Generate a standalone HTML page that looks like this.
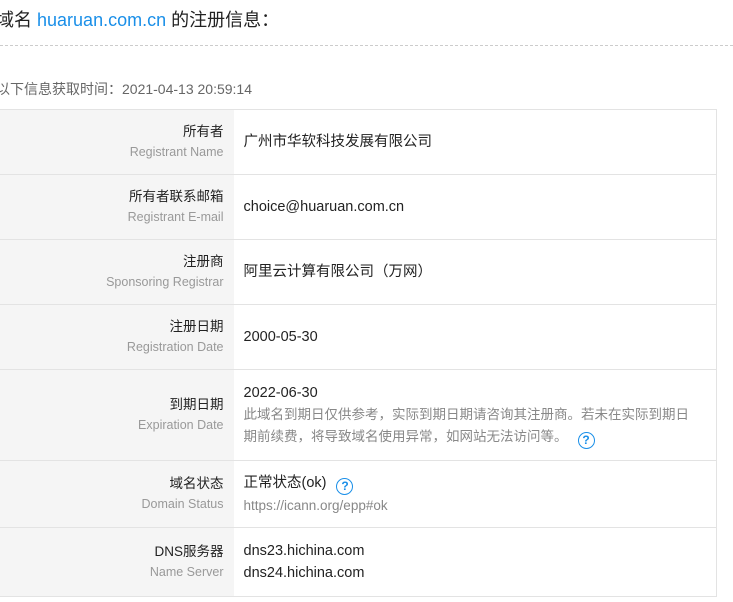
<!DOCTYPE html>
<html><head><meta charset="utf-8"><style>
*{margin:0;padding:0;box-sizing:border-box}
body{width:733px;height:602px;overflow:hidden;background:#fff;font-family:"Liberation Sans","Noto Sans CJK SC",sans-serif;color:#333;position:relative}
.h{position:absolute;left:-4px;top:6px;font-size:18px;color:#222;white-space:nowrap}
.h a{color:#1a8fe8;text-decoration:none}
.dash{position:absolute;left:0;top:45px;width:733px;border-top:1px dashed #ccc}
.t{position:absolute;left:-4px;top:79px;font-size:14px;color:#666}
table{position:absolute;left:-1px;top:109px;width:718px;border-collapse:collapse}
td{border:1px solid #e3e3e3;vertical-align:middle}
td.l{width:234px;background:#f5f5f5;text-align:right;padding-right:10px;border-right:none}
td.l b{display:block;font-weight:normal;font-size:13.5px;color:#222;line-height:20px}
td.l i{display:block;font-style:normal;font-size:12.5px;color:#999;line-height:20px}
td.v{padding-left:10px;padding-right:10px;font-size:14.5px;color:#222;line-height:22px;border-left:none}
.s{font-size:13.5px;color:#888;line-height:22px}
.q{display:inline-block;width:17px;height:17px;border:1.5px solid #1a8fe8;border-radius:50%;color:#1a8fe8;font-size:12px;line-height:14px;text-align:center;font-weight:bold;vertical-align:-3px;margin-left:10px}
</style></head><body>
<div class="h">域名 <a>huaruan.com.cn</a> 的注册信息：</div>
<div class="dash"></div>
<div class="t">以下信息获取时间：2021-04-13 20:59:14</div>
<table>
<tr style="height:65px"><td class="l"><b>所有者</b><i>Registrant Name</i></td><td class="v">广州市华软科技发展有限公司</td></tr>
<tr style="height:65px"><td class="l"><b>所有者联系邮箱</b><i>Registrant E-mail</i></td><td class="v">choice@huaruan.com.cn</td></tr>
<tr style="height:65px"><td class="l"><b>注册商</b><i>Sponsoring Registrar</i></td><td class="v">阿里云计算有限公司（万网）</td></tr>
<tr style="height:65px"><td class="l"><b>注册日期</b><i>Registration Date</i></td><td class="v">2000-05-30</td></tr>
<tr style="height:91px"><td class="l"><b>到期日期</b><i>Expiration Date</i></td><td class="v">2022-06-30<div class="s">此域名到期日仅供参考，实际到期日期请咨询其注册商。若未在实际到期日<br>期前续费，将导致域名使用异常，如网站无法访问等。<span class="q">?</span></div></td></tr>
<tr style="height:67px"><td class="l"><b>域名状态</b><i>Domain Status</i></td><td class="v">正常状态(ok)<span class="q">?</span><div class="s">https://icann.org/epp#ok</div></td></tr>
<tr style="height:69px"><td class="l"><b>DNS服务器</b><i>Name Server</i></td><td class="v">dns23.hichina.com<br>dns24.hichina.com</td></tr>
</table>
</body></html>
